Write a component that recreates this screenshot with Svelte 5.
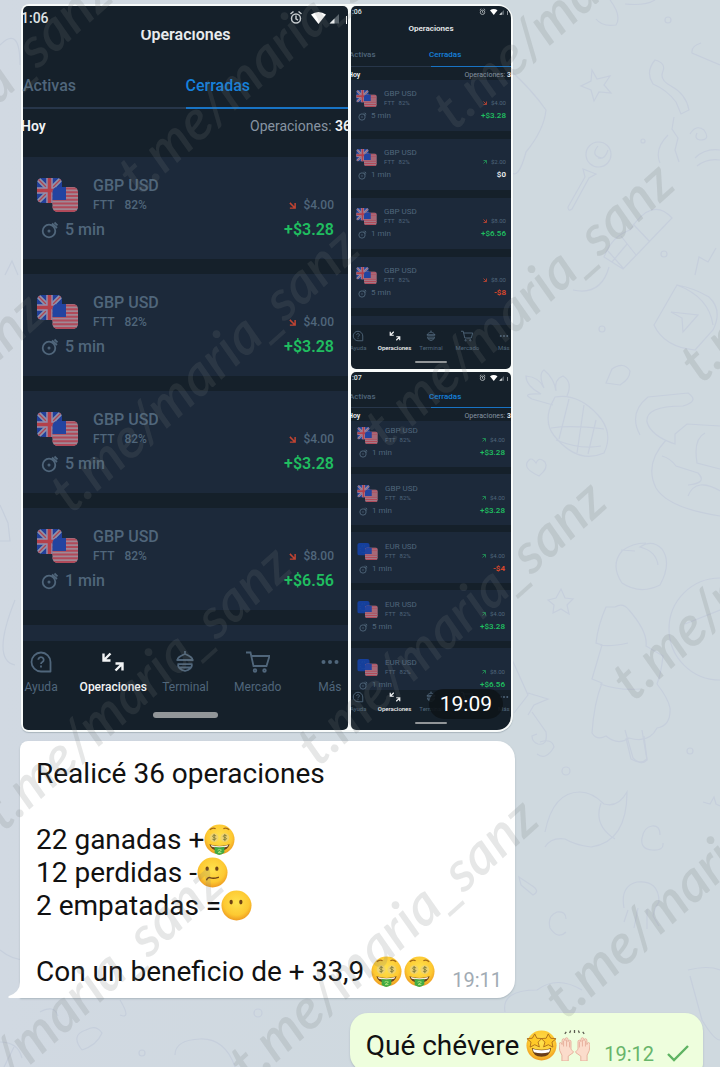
<script>
  const trade = (pair, time, dir, stake, result) => ({ pair, time, dir, stake, result });

  const screens = [
    {
      kind: 'large', clock: '1:06', title: 'Operaciones', peek: true,
      trades: [
        trade('GBP USD', '5 min', 'down', '$4.00', '+$3.28'),
        trade('GBP USD', '5 min', 'down', '$4.00', '+$3.28'),
        trade('GBP USD', '5 min', 'down', '$4.00', '+$3.28'),
        trade('GBP USD', '1 min', 'down', '$8.00', '+$6.56')
      ]
    },
    {
      kind: 'small', clock: ':06', title: 'Operaciones', peek: true,
      trades: [
        trade('GBP USD', '5 min', 'down', '$4.00', '+$3.28'),
        trade('GBP USD', '1 min', 'up', '$2.00', '$0'),
        trade('GBP USD', '1 min', 'down', '$8.00', '+$6.56'),
        trade('GBP USD', '5 min', 'down', '$8.00', '-$8')
      ]
    },
    {
      kind: 'small scrolled', clock: ':07', title: '', peek: false,
      trades: [
        trade('GBP USD', '1 min', 'up', '$4.00', '+$3.28'),
        trade('GBP USD', '1 min', 'up', '$4.00', '+$3.28'),
        trade('EUR USD', '1 min', 'up', '$4.00', '-$4'),
        trade('EUR USD', '5 min', 'up', '$4.00', '+$3.28'),
        trade('EUR USD', '1 min', 'up', '$8.00', '+$6.56')
      ]
    }
  ];

  const navItems = ['Ayuda', 'Operaciones', 'Terminal', 'Mercado', 'Más'];

  const tone = (r) => (r[0] === '+' ? 'win' : r[0] === '-' ? 'loss' : 'even');

  // The signature repeats on a slanted lattice across the whole chat.
  const marks = [];
  for (let j = -1; j < 4; j++) {
    for (let i = -1; i < 3; i++) {
      marks.push({ x: 144 + 315 * i - 68 * j, y: 202 - 65 * i + 318 * j });
    }
  }
</script>

{#snippet flags(pair)}
  <svg class="flags" viewBox="0 0 41 34" aria-hidden="true">
    <defs>
      <clipPath id="flag-back"><rect x="0" y="0" width="25" height="25" rx="5" /></clipPath>
      <clipPath id="flag-front"><rect x="15.500" y="9" width="25.500" height="25" rx="5" /></clipPath>
    </defs>
    <g clip-path="url(#flag-back)">
      {#if pair.startsWith('GBP')}
        <rect width="25" height="25" fill="#22409a" />
        <path d="M0 0L25 25M25 0L0 25" stroke="#8d93ab" stroke-width="4.500" />
        <path d="M0 0L25 25M25 0L0 25" stroke="#b04350" stroke-width="1.300" />
        <path d="M12.500 0V25M0 12.500H25" stroke="#958eac" stroke-width="6.500" />
        <path d="M12.500 0V25M0 12.500H25" stroke="#b4404a" stroke-width="3.600" />
      {:else}
        <rect width="25" height="25" fill="#153f9c" />
        <circle cx="12.500" cy="12.500" r="7" fill="none" stroke="#2858a2" stroke-width="1.500" stroke-dasharray="1.500 2.200" />
      {/if}
    </g>
    <g clip-path="url(#flag-front)">
      <rect x="15" y="9" width="26" height="25" fill="#a08794" />
      <path d="M15 10.500H41M15 14.200H41M15 18H41M15 21.800H41M15 25.500H41M15 29.200H41M15 33H41" stroke="#b04a5a" stroke-width="2.100" />
      <rect x="15" y="9" width="14" height="13" fill="#2344a0" />
    </g>
  </svg>
{/snippet}

{#snippet navIcon(name)}
  <svg class="icon" viewBox="0 0 24 24" fill="none" stroke="currentColor" stroke-width="1.800" aria-hidden="true">
    {#if name === 'Ayuda'}
      <path d="M12 2.500a9.500 9.500 0 1 0 0 19h9.500V12A9.500 9.500 0 0 0 12 2.500z" stroke-linejoin="round" />
      <path d="M9.300 9.800a2.700 2.700 0 1 1 4.100 2.300c-1 .6-1.400 1-1.400 2" /><path d="M12 15.500v2" />
    {:else if name === 'Operaciones'}
      <path d="M9.500 3.500L3 10M2.500 3.500v7h7M14.500 20.500L21 14M14.500 13.500h7v7" stroke-width="2.400" />
    {:else if name === 'Terminal'}
      <path d="M12 1v3M4.500 10c0-3 3-4 7.500-6 4.500 2 7.500 3 7.500 6zM3.500 10h17M4.500 14.200h15M5 14.500c0 3 3 5.500 7 6.500 4-1 7-3.500 7-6.500M6 17.500h12" />
    {:else if name === 'Mercado'}
      <path d="M0 2.500h4.500l3 13.500h13L23.500 6H5.300" /><circle cx="9" cy="20.500" r="1.300" /><circle cx="18.500" cy="20.500" r="1.300" />
    {:else}
      <g fill="currentColor" stroke="none"><circle cx="5.500" cy="12" r="2" /><circle cx="12" cy="12" r="2" /><circle cx="18.500" cy="12" r="2" /></g>
    {/if}
  </svg>
{/snippet}

{#snippet phone(s)}
  <article class="phone {s.kind}">
    <div class="status">
      <span>{s.clock}</span>
      <svg viewBox="0 0 58 16" aria-hidden="true">
        <g fill="none" stroke="#c3c8cb" stroke-width="1.500">
          <circle cx="7" cy="8.500" r="4.500" /><path d="M7 5.500v3.300l2 1.300M1.500 4l3-2.500M12.500 4l-3-2.500" />
        </g>
        <path d="M22 4.500q7.500-5 15 0L29.500 14z" fill="#fff" />
        <path d="M40.500 13.500L50 4v9.500z" fill="#58626a" /><path d="M40.500 13.500l5-5v5z" fill="#e6e9ea" />
        <path d="M57 6h1v8h-1z" fill="#fff" />
      </svg>
    </div>
    {#if s.title}<h2>{s.title}</h2>{/if}
    <div class="tabs">
      <button type="button">Activas</button>
      <button type="button" class="on">Cerradas</button>
    </div>
    <div class="day"><b>Hoy</b><span>Operaciones: <b>36</b></span></div>
    <div class="list">
      {#each s.trades as t}
        <div class="card">
          <div class="top">
            {@render flags(t.pair)}
            <div class="name">
              <div class="pair">{t.pair}</div>
              <div class="meta"><span>FTT</span><span>82%</span></div>
            </div>
            <div class="stake">
              <svg class="arrow {t.dir}" viewBox="0 0 8 8" aria-hidden="true"><path d="M1 1l5.500 5.500M7 1v6H1" fill="none" stroke="currentColor" stroke-width="1.700" /></svg>
              {t.stake}
            </div>
          </div>
          <div class="bottom">
            <svg class="timer" viewBox="0 0 18 18" fill="none" stroke="currentColor" stroke-width="1.800" aria-hidden="true">
              <circle cx="8" cy="10" r="6.300" /><path d="M11 2.500l5 4.500M13.500 1.500l3 2.800" /><circle cx="8" cy="10" r=".6" />
            </svg>
            <span>{t.time}</span>
            <strong class={tone(t.result)}>{t.result}</strong>
          </div>
        </div>
      {/each}
      {#if s.peek}<div class="peek"></div>{/if}
    </div>
    <nav>
      {#each navItems as n}
        <button type="button" class:current={n === 'Operaciones'}>{@render navIcon(n)}<span>{n}</span></button>
      {/each}
    </nav>
    <div class="handle"></div>
  </article>
{/snippet}

{#snippet emoji(name)}
  <svg class="emoji" viewBox="0 0 32 32" role="img" aria-label={name}>
    <defs>
      <radialGradient id="face" cx=".5" cy=".4" r=".6">
        <stop offset="0" stop-color="#ffe24d" /><stop offset=".7" stop-color="#fdc932" /><stop offset="1" stop-color="#ee9a20" />
      </radialGradient>
    </defs>
    {#if name === 'hands'}
      <g fill="#fbdccb" stroke="#e5ab98" stroke-width=".9" stroke-linejoin="round">
        <path d="M3 32V26Q0 22 0 15q0-2 1.500-2T3.200 15V11q0-2 1.500-2t1.500 2V10q0-2 1.600-2T9.400 10v2q0-1.500 1.500-1.500t1.500 1.500v8l1.600 1.500q1.500 1 .5 2L9.500 27v5z" />
        <path d="M29 32V26q3-4 3-11 0-2-1.500-2T28.800 15V11q0-2-1.500-2t-1.500 2V10q0-2-1.600-2T22.600 10v2q0-1.500-1.500-1.500T19.600 12v8L18 21.500q-1.500 1-.5 2L22.500 27v5z" />
        <path d="M4.700 11v6M7.800 10v7M10.900 12v6M27.300 11v6M24.200 10v7M21.100 12v6" />
      </g>
      <path d="M6 4l1.500-2M11 3l1-2.500M16 3V0M21 3l-1-2.500M26 4l-1.500-2" stroke="#59594e" stroke-width="1.300" />
    {:else}
      <circle cx="16" cy="16" r="15.500" fill="url(#face)" />
      {#if name === 'money'}
        <path d="M6 6q3-3 6-1M20 5q3-2 6 1" fill="none" stroke="#a56b18" stroke-width="1.300" />
        <circle cx="10.500" cy="14" r="4.500" fill="#efd36f" /><circle cx="21.500" cy="14" r="4.500" fill="#efd36f" />
        <path d="M12.500 12.300q-3.600-1.800-3.600.4c0 1.700 3.400.9 3.400 2.600q0 1.700-3.600.4M10.500 10.300v7.400M23.500 12.300q-3.600-1.800-3.600.4c0 1.700 3.400.9 3.400 2.600q0 1.700-3.600.4M21.500 10.300v7.400" fill="none" stroke="#85803f" stroke-width="1" />
        <path d="M5.500 21q10.500 3.500 21 0-2 7-10.500 7T5.500 21z" fill="#68411d" /><path d="M7 21.600q9 2.700 18 0l-1 1.800q-8 2-16 0z" fill="#fff5e0" />
        <path d="M11 23.500q5 1.300 10 0v6Q16 34 11 30z" fill="#41aa45" /><path d="M14 27q2-1.500 4 0l-3.500 2.500H18" fill="none" stroke="#a9df76" />
      {:else if name === 'confused'}
        <ellipse cx="10.500" cy="12" rx="1.700" ry="2.300" fill="#704315" /><ellipse cx="20.500" cy="12" rx="1.700" ry="2.300" fill="#704315" />
        <path d="M10 23.500q1-3 4-2t8-.5" fill="none" stroke="#704315" stroke-width="1.500" stroke-linecap="round" />
      {:else if name === 'silent'}
        <ellipse cx="10.500" cy="12.500" rx="1.700" ry="2.500" fill="#704315" /><ellipse cx="20.500" cy="12.500" rx="1.700" ry="2.500" fill="#704315" />
      {:else}
        <g fill="#ffc928" stroke="#a86718" stroke-width=".9" stroke-linejoin="round">
          <path d="M9 4l2.200 4.500 5 .3-3.700 3.700 1.300 5-4.800-2.300-4.800 2.500 1-5.200L1 9l5.500-.5zM23 4l-2.200 4.500-5 .3 3.700 3.700-1.300 5 4.800-2.300 4.800 2.500-1-5.200L31 9l-5.500-.5z" />
        </g>
        <path d="M6 18.500q10 4 20 0-1 9-10 9t-10-9z" fill="#6a3e18" /><path d="M7 19.500q9 3 18 0-.3 2-1.300 3.500-7.700 2-15.400 0Q7.300 21.500 7 19.500z" fill="#fff" />
      {/if}
    {/if}
  </svg>
{/snippet}

<main>
  <svg class="doodles" viewBox="0 0 720 1067" preserveAspectRatio="xMinYMin slice" aria-hidden="true">
    <path d="M592 70l5 9 13-3-6 9 7 8-12-1-5 9-3-11-10-4 10-5zM655 60q-10 12-2 24 14 6 23 18l5 12 8-4q-3-16-18-24-12-6-8-15 3-8-8-11zM568 207l17-30-2-8 13 5-7 4-17 31q-4 3-4-2zM598 142a12 12 0 1 0 1 25 12 12 0 0 0-1-25m0 4q-8 10 4 12m-4 0q7 2 10-8M668 135q-14 14-8 28M674 117l-2 12 6 9-3 12 4 12M690 134q6-10 14-4 7 10-4 10-6-1-3-7M695 158q10-10 25-8M697 166q10-8 23-6" />
    <path d="M604 257l19 12 49-51q-20-22-42 12-18 6-26 27zM612 262l15-18M623 268l-15-17M636 255l-15-19M650 242l-17-18M573 290q28 6 36-23M510 70q22 20 36 40-2 20-20 42-8 30-16 19" />
    <path d="M677 285l-23 40q10 22 41 25l18-20q10-20-4-33-15-9-32-12zM677 285q32 12 36 40M671 312l27 3-15 17-1-14zM701 43q-10 3-9 10l28 12M695 275l4-18 9 5 8-14M610 0q12 16 6 25-14 2-20-6M625 4q20 2 30-4" />
    <path d="M551 405q-8 20 6 34 22 25 47 14 10-20-6-38-20-22-43-18zM551 428q20-3 53 1M556 440q25 10 45 6M569 399l-10 40M584 405l-7 48M596 420l-8 34M553 405l-21-6q-12-6 9-5-15-8-15-18 13 1 18 12-6-14 0-18 10 8 12 21-2-12 7-15 10 6 4 20M529 460q-8 8 10 16 10-8 6-14-6-6-9 1-4-6-7-3zM606 383l6-14q12-8 18 2 0 8-10 14z" />
    <path d="M640 435q-12-22 8-38l40-4q12 8-5 13-38 0-36 16 4 14 28 22v-10l12-10 33 2M666 440q-22 24-10 48 12 20 64 28M662 456q8 2 14 10l22 7q10 10-10 12M705 433q-12 6-8 30l23 6M688 496q8-20 34-4" />
    <path d="M646 543q-14 0-24 8-12 14 0 32 18 12 38 2 12-22 2-36-10-10-22-2 16 4 18 18M621 550l14 1M548 600l8-2 5-9 4 9 8 1-6 6 2 9-8-5-8 4 1-8zM606 607q-8 18-10 36l6 2-10 34 10 4q-8 20-10 50 5 8 14 3 12 10 23 2 20 6 28-10 14-2 13-20-2-10-13-24 4-10 6-28l-17-10q2-14-17-36-6-8-14-3zM600 645q10 2 28-2M600 684q20 7 40 5M626 738l5 21q10 6 16 0l-3-23M510 655l18 40-14 18M528 693l20 6-14 6-6 10M532 712l14 20q2 14-8 12-6-2-6-8l5-2M720 578a48 48 0 0 0 0 102M685 624l35-14" />
    <path d="M545 832q8-40 35-40 12 0 24 12 14 4 23-12 0 50-36 55-16-2-26-8-14-2-20 8M601 803q-8 22 14 36M521 885l12 10q8-4-2-10l-12-8zM660 835q0-10-8-9t-10 12 10 12 11-7M566 919q0-8-9-7-10 4-7 16 8 12 16 4M624 908q-4-22 13-26 22-2 22 20-4 5-6 14l6 10M628 910l-4 12M638 908l-4 20M647 909v20M703 802l7 2 4-7 2 7 4 2M625 730l8 28q8 8 14 2l-5-30M688 970q20-5 32 0M690 976l12 44q12 20 18 20M505 1012q-4-22 32-22 20-15 45 0M540 742q12-4 14 5-8 14-17 7" />
    <path d="M0 45q20-20 20 20M0 505l8 18 2 18H0M15 600q-24 60 0 65M0 950q12 10 26 10M82 1050q-12-15 4-20 10-6 16 3-5 12-20 17M175 1055q0-15 25-16t35 28M0 1042q18 0 22 16M120 1000q12 20 0 15M40 1012q14-8 18 4M5 275l7-14 6 14M4 1067l10-20" />
    <circle cx="668" cy="20" r="3" /><circle cx="643" cy="141" r="2" /><circle cx="664" cy="254" r="3" /><circle cx="602" cy="329" r="3" /><circle cx="566" cy="771" r="4" /><circle cx="690" cy="751" r="3" /><circle cx="142" cy="1053" r="3" /><circle cx="258" cy="1013" r="4" />
  </svg>

  <section class="album">
    {#each screens as s}{@render phone(s)}{/each}
    <time class="pill">19:09</time>
  </section>

  <section class="bubble in">
    <svg class="tail" viewBox="0 0 14 16" aria-hidden="true"><path d="M14 0H12Q12 10 1 14q-2 2 1 2h12z" fill="#fff" /></svg>
    <div class="text">
      <p>Realicé 36 operaciones</p>
      <p>&nbsp;</p>
      <p>22 ganadas +{@render emoji('money')}</p>
      <p>12 perdidas -{@render emoji('confused')}</p>
      <p>2 empatadas ={@render emoji('silent')}</p>
      <p>&nbsp;</p>
      <p>Con un beneficio de + 33,9 {@render emoji('money')}{@render emoji('money')}</p>
    </div>
    <time>19:11</time>
  </section>

  <section class="bubble out">
    <div class="text"><p>Qué chévere {@render emoji('stars')}{@render emoji('hands')}</p></div>
    <time>19:12</time>
    <svg class="check" viewBox="0 0 24 18" aria-label="Enviado"><path d="M2 10l6 6L22 2" fill="none" stroke="#5fb363" stroke-width="2.400" /></svg>
  </section>

  <div class="marks" aria-hidden="true">
    {#each marks as m}
      <span style="left: {m.x}px; top: {m.y}px">t.me/maria_sanz</span>
    {/each}
  </div>
</main>

<style>
  :global(body) { margin: 0; }
  main {
    position: relative; box-sizing: border-box; height: 100vh; overflow: hidden;
    padding: 4px 17px 0 20px; background: linear-gradient(90deg, #d1d9e2, #cfd9df 60%);
    font-family: Roboto, "Noto Sans", sans-serif; display: flex; flex-direction: column; align-items: flex-start;
  }
  main > section { flex: none; }
  .doodles { position: absolute; inset: 0; width: 100%; height: 100%; fill: none; stroke: #c6cfdc; stroke-width: 1.200; }
  button { border: 0; padding: 0; background: none; font: inherit; color: inherit; text-align: left; }
  svg { display: block; }

  .album {
    position: relative; box-sizing: border-box; width: 100%; max-width: 492px; margin-left: 1px; padding: 2px; background: #f8fbfa;
    display: grid; grid-template-columns: 65fr 32fr; grid-template-rows: auto 1fr; gap: 3px;
    border-radius: 8px 16px 16px 8px; box-shadow: 0 1px 1px #a9b5bd;
  }
  .phone {
    display: flex; flex-direction: column; min-width: 0; overflow: hidden; border-radius: 5px;
    background: #15202a; color: #50667b; font-weight: 500;
  }
  .large { grid-row: span 2; }
  .small:nth-child(2) { border-top-right-radius: 12px; }
  .scrolled { border-bottom-right-radius: 14px; }
  .status { display: flex; justify-content: space-between; align-items: center; height: 24px; font-size: 14px; color: #dfe3e5; margin-left: -2px; }
  .status svg { width: 60px; height: 16px; }
  h2 { margin: 0; height: 16px; line-height: 10px; font-size: 16px; font-weight: 600; text-align: center; color: #e8ebed; overflow: hidden; }
  .tabs { display: grid; grid-template-columns: 1fr 1fr; font-size: 16px; line-height: 20px; }
  .tabs button { padding: 30px 0 11px; border-bottom: 2px solid #27364a; }
  .tabs .on { color: #1680dc; border-color: #1873c4; }
  .day { display: flex; justify-content: space-between; margin: 0 -3px 0 -2px; padding: 7px 0 21px; font-size: 14px; line-height: 20px; font-weight: 400; color: #8794a2; white-space: nowrap; }
  .day b { font-weight: 600; color: #f0f2f4; }
  .list { display: flex; flex-direction: column; gap: 15px; }
  .card, .peek { background: #1c293a; flex: none; }
  .peek { height: 16px; }
  .card { padding: 19px 14px; font-size: 16px; line-height: 20px; white-space: nowrap; }
  .top { display: flex; align-items: center; }
  .flags { width: 41px; height: 34px; margin-right: 15px; }
  .meta { display: flex; gap: 10px; font-size: 12px; line-height: 18px; }
  .stake { margin-left: auto; align-self: flex-end; display: flex; align-items: center; gap: 7px; font-size: 12px; line-height: 18px; }
  .arrow { width: 7px; height: 7px; color: #c24432; }
  .arrow.up { transform: rotate(-90deg); color: #219557; }
  .bottom { display: flex; align-items: center; margin-top: 6px; }
  .timer { width: 18px; height: 18px; margin: 0 6px 0 4px; }
  .bottom strong { margin-left: auto; font-weight: 600; }
  .win { color: #20bd60; }
  .loss { color: #e1492b; }
  .even { color: #f0f2f4; }
  nav { position: relative; display: grid; grid-template-columns: repeat(5, 1fr); margin: 0 -18px; padding-top: 9px; font-size: 12px; line-height: 16px; font-weight: 400; background: #15202a; }
  nav button { display: flex; flex-direction: column; align-items: center; gap: 5px; min-width: 0; }
  .icon { width: 24px; height: 24px; }
  .current { color: #f2f4f5; font-weight: 500; }
  .handle { align-self: center; width: 20%; height: 6px; margin: 17px 0 12px; border-radius: 3px; background: #929699; flex: none; }

  .small .status { height: 12px; font-size: 7px; margin: 0 3px 0 1px; }
  .small .status svg { width: 29px; height: 8px; }
  .small h2 { height: 22px; line-height: 22px; font-size: 8px; }
  .small .tabs { font-size: 8px; line-height: 10px; }
  .small .tabs button { padding: 10px 0 6px; border-bottom-width: 1px; text-indent: -2px; }
  .small .day { padding: 3px 0 0; margin: 0 -4px 0 -3px; font-size: 7px; line-height: 10px; }
  .small .list { gap: 8px; }
  .small .peek { height: 9px; }
  .small .card { padding: 9px 5px 10px; font-size: 8px; line-height: 10px; font-weight: 400; }
  .small .flags { width: 21px; height: 17px; margin-right: 7px; }
  .small .meta { gap: 4px; font-size: 6px; line-height: 8px; }
  .small .stake { gap: 4px; font-size: 6px; line-height: 8px; }
  .small .arrow { width: 4px; height: 4px; }
  .small .bottom { margin-top: 4px; }
  .small .timer { width: 9px; height: 9px; margin: 0 4px 0 2px; }
  .small .bottom strong { font-weight: 600; }
  .small nav { margin: 0 -11px; padding-top: 5px; font-size: 6px; line-height: 8px; }
  .small nav button { gap: 2px; }
  .small .icon { width: 12px; height: 12px; }
  .small .handle { height: 2px; margin: 9px 0 6px; }

  .scrolled .tabs button { padding: 8px 0 5px; }
  .scrolled .day { position: relative; background: #15202a; }
  .scrolled .list { flex: 1 1 0; min-height: 0; gap: 7px; overflow: hidden; }
  .scrolled .card:first-child { margin-top: -5px; }
  .scrolled .card { padding: 10px 6px 9px; }
  .scrolled nav { padding-top: 1px; }

  .pill { position: absolute; right: 10px; bottom: 13px; padding: 0 11px; border-radius: 15px; background: rgba(14, 19, 24, .88); color: #fff; font-size: 21px; line-height: 30px; }

  .bubble { position: relative; box-sizing: border-box; display: flex; align-items: flex-end; font-size: 28px; line-height: 33px; color: #111; box-shadow: 0 1px 2px #aab6be; }
  .in { width: 100%; max-width: 495px; margin-top: 9px; padding: 16px 13px 10px 16px; background: #fff; border-radius: 8px 18px 18px 0; }
  .out { align-self: flex-end; margin-top: 15px; padding: 16px 13px 10px 16px; background: #eefedd; border-radius: 18px 18px 8px 18px; }
  .tail { position: absolute; left: -12px; bottom: 0; width: 14px; height: 16px; }
  .text { white-space: nowrap; }
  p { margin: 0; }
  .emoji { display: inline-block; width: 31px; height: 31px; margin-right: 2px; vertical-align: -6px; }
  time { font-size: 20px; line-height: 24px; color: #a1abb4; }
  .in time { margin-left: auto; margin-bottom: -4px; }
  .out time { margin: 0 12px 0 12px; color: #68b56b; margin-bottom: -4px; }
  .check { width: 24px; height: 18px; }

  .marks { position: absolute; inset: 0; overflow: hidden; pointer-events: none; }
  .marks span {
    position: absolute; transform-origin: 0 100%; transform: translateY(-100%) rotate(-42deg);
    font: italic 600 56px/56px Lato, "Open Sans", sans-serif; color: rgba(118, 124, 120, .18); white-space: nowrap;
  }
</style>
